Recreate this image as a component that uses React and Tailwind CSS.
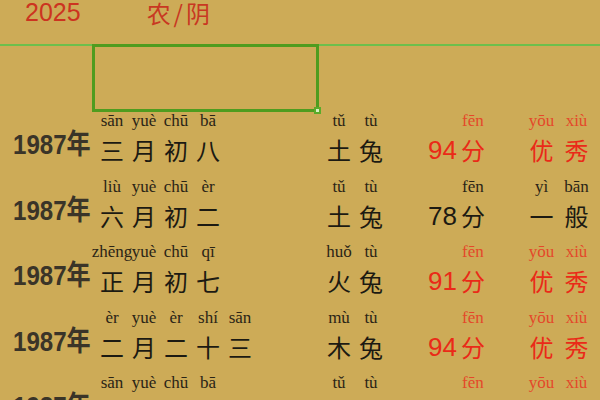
const rows = [
  {
    date: [['sān', '三'], ['yuè', '月'], ['chū', '初'], ['bā', '八']],
    el: [['tǔ', '土'], ['tù', '兔']],
    score: '94',
    red: true,
    grade: [['yōu', '优'], ['xiù', '秀']],
  },
  {
    date: [['liù', '六'], ['yuè', '月'], ['chū', '初'], ['èr', '二']],
    el: [['tǔ', '土'], ['tù', '兔']],
    score: '78',
    red: false,
    grade: [['yì', '一'], ['bān', '般']],
  },
  {
    date: [['zhēng', '正'], ['yuè', '月'], ['chū', '初'], ['qī', '七']],
    el: [['huǒ', '火'], ['tù', '兔']],
    score: '91',
    red: true,
    grade: [['yōu', '优'], ['xiù', '秀']],
  },
  {
    date: [['èr', '二'], ['yuè', '月'], ['èr', '二'], ['shí', '十'], ['sān', '三']],
    el: [['mù', '木'], ['tù', '兔']],
    score: '94',
    red: true,
    grade: [['yōu', '优'], ['xiù', '秀']],
  },
  {
    date: [['sān', '三'], ['yuè', '月'], ['chū', '初'], ['bā', '八']],
    el: [['tǔ', '土'], ['tù', '兔']],
    score: '94',
    red: true,
    grade: [['yōu', '优'], ['xiù', '秀']],
  },
];

const Ruby = ({ py, hz, red, wide }) => {
  return (
    <div className={wide ? 'flex w-[35px] flex-col items-center' : 'flex w-[32px] flex-col items-center'}>
      <span
        className={
          red
            ? "h-[18px] whitespace-nowrap font-['Liberation_Serif',serif] text-[17px] leading-[18px] text-[#e4482a]"
            : "h-[18px] whitespace-nowrap font-['Liberation_Serif',serif] text-[17px] leading-[18px] text-[#2a2416]"
        }
      >
        {py}
      </span>
      <span
        className={
          red
            ? "mt-[5px] h-[30px] font-['Noto_Sans_CJK_SC',sans-serif] text-[24px] leading-[30px] text-[#ea2a18]"
            : "mt-[5px] h-[30px] font-['Noto_Sans_CJK_SC',sans-serif] text-[24px] leading-[30px] text-[#1c1a12]"
        }
      >
        {hz}
      </span>
    </div>
  );
};

const Row = ({ row }) => {
  return (
    <div className="flex h-[65.5px] shrink-0">
      <div className="w-[96px] pl-[13px] pt-[19px]">
        <div className="origin-left scale-x-[0.86] whitespace-nowrap font-['Liberation_Sans','Noto_Sans_CJK_SC',sans-serif] text-[28px] font-bold leading-[28px] text-[#3a3428]">
          1987年
        </div>
      </div>
      <div className="flex w-[227px]">
        {row.date.map(([py, hz], i) => (
          <Ruby key={i} py={py} hz={hz} />
        ))}
      </div>
      <div className="flex w-[98px]">
        {row.el.map(([py, hz], i) => (
          <Ruby key={i} py={py} hz={hz} />
        ))}
      </div>
      <div className="flex w-[103px] pl-[7px]">
        <span
          className={
            row.red
              ? "mt-[23px] h-[30px] font-['Liberation_Sans',sans-serif] text-[26px] leading-[30px] text-[#ea2a18]"
              : "mt-[23px] h-[30px] font-['Liberation_Sans',sans-serif] text-[26px] leading-[30px] text-[#1c1a12]"
          }
        >
          {row.score}
        </span>
        <Ruby py="fēn" hz="分" red={row.red} />
      </div>
      <div className="flex">
        {row.grade.map(([py, hz], i) => (
          <Ruby key={i} py={py} hz={hz} red={row.red} wide />
        ))}
      </div>
    </div>
  );
};

const App = () => {
  return (
    <div className="flex h-[400px] w-[600px] flex-col overflow-hidden bg-[#cdab57]">
      <div className="flex h-[44px] shrink-0">
        <span className="pl-[25px] font-['Liberation_Sans',sans-serif] text-[25px] leading-[24px] text-[#cc3420]">
          2025
        </span>
        <span className="ml-[66px] font-['Noto_Sans_CJK_SC',sans-serif] text-[24px] leading-[26px] tracking-[3px] text-[#c83822]">
          农/阴
        </span>
      </div>
      <div className="h-[2px] shrink-0 bg-[#6cbf4c]"></div>
      <div className="relative -mt-[2px] ml-[92px] h-[68px] w-[227px] shrink-0 border-[3px] border-[#4f9c1f]">
        <div className="absolute -bottom-[5px] -right-[5px] h-[7px] w-[7px] border-2 border-[#5aab2a] bg-[#d8f0c0]"></div>
      </div>
      {rows.map((row, i) => (
        <Row key={i} row={row} />
      ))}
    </div>
  );
};

export default App;
